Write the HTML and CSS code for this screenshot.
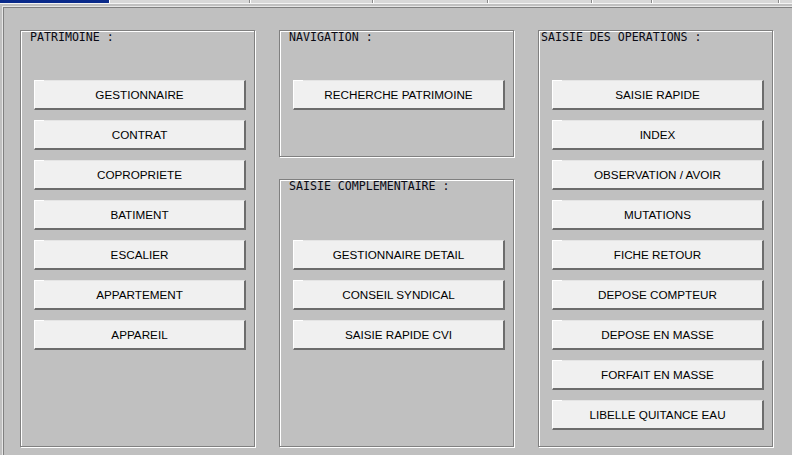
FILE: index.html
```html
<!DOCTYPE html>
<html>
<head>
<meta charset="utf-8">
<link rel="stylesheet" href="styles.css">
</head>
<body>
<div class="tabs">
  <div class="tab active" style="width:109px"></div>
  <div class="tab" style="width:141px"></div>
  <div class="tab" style="width:123px"></div>
  <div class="tab" style="width:115px"></div>
  <div class="tab" style="width:104px"></div>
  <div class="tab" style="width:60px"></div>
  <div class="tab" style="width:127px"></div>
  <div class="tab" style="width:40px"></div>
</div>
<div class="panel">
  <div class="columns">
    <div class="col">
      <div class="group group-full">
        <div class="legend">PATRIMOINE :</div>
        <div class="buttons first">
          <div class="btn">GESTIONNAIRE</div>
          <div class="btn">CONTRAT</div>
          <div class="btn">COPROPRIETE</div>
          <div class="btn">BATIMENT</div>
          <div class="btn">ESCALIER</div>
          <div class="btn">APPARTEMENT</div>
          <div class="btn">APPAREIL</div>
        </div>
      </div>
    </div>
    <div class="col col-split">
      <div class="group group-nav">
        <div class="legend">NAVIGATION :</div>
        <div class="buttons first">
          <div class="btn">RECHERCHE PATRIMOINE</div>
        </div>
      </div>
      <div class="group group-compl">
        <div class="legend">SAISIE COMPLEMENTAIRE :</div>
        <div class="buttons second">
          <div class="btn">GESTIONNAIRE DETAIL</div>
          <div class="btn">CONSEIL SYNDICAL</div>
          <div class="btn">SAISIE RAPIDE CVI</div>
        </div>
      </div>
    </div>
    <div class="col">
      <div class="group group-full">
        <div class="legend legend-tight">SAISIE DES OPERATIONS :</div>
        <div class="buttons first">
          <div class="btn">SAISIE RAPIDE</div>
          <div class="btn">INDEX</div>
          <div class="btn">OBSERVATION / AVOIR</div>
          <div class="btn">MUTATIONS</div>
          <div class="btn">FICHE RETOUR</div>
          <div class="btn">DEPOSE COMPTEUR</div>
          <div class="btn">DEPOSE EN MASSE</div>
          <div class="btn">FORFAIT EN MASSE</div>
          <div class="btn">LIBELLE QUITANCE EAU</div>
        </div>
      </div>
    </div>
  </div>
</div>
</body>
</html>
```
FILE: styles.css
```css
html, body {
  margin: 0;
  padding: 0;
  background: #c0c0c0;
  overflow: hidden;
  width: 792px;
  height: 455px;
}

.tabs {
  display: flex;
  height: 3px;
  border-bottom: 1px solid #f4f4f4;
  overflow: hidden;
}

.tab {
  flex: none;
  box-sizing: border-box;
  height: 3px;
  background: #d8d8d8;
  border-left: 1px solid #ffffff;
  border-right: 1px solid #8a8a8a;
}

.tab.active {
  background: #0a2a8a;
  border: none;
}

.panel {
  margin: 3px 0 0 3px;
  width: 820px;
  height: 470px;
  box-sizing: border-box;
  border-top: 1px solid #808080;
  border-left: 1px solid #808080;
  box-shadow: -1px -1px 0 #e6e6e6;
  padding: 22px 0 0 16px;
}

.columns {
  display: grid;
  grid-template-columns: 235px 235px 235px;
  column-gap: 24px;
}

.col-split {
  display: flex;
  flex-direction: column;
  gap: 22px;
}

.group {
  box-sizing: border-box;
  width: 235px;
  border: 1px solid #808080;
  box-shadow: 1px 1px 0 #ffffff, inset 1px 1px 0 #ffffff;
}

.group-full { height: 417px; }
.group-nav { height: 127px; }
.group-compl { height: 268px; }

.legend {
  font-family: "DejaVu Sans Mono", monospace;
  font-size: 11.6px;
  line-height: 12px;
  height: 14px;
  color: #0a0a14;
  padding-left: 9px;
  white-space: pre;
}

.legend-tight { padding-left: 2px; }

.buttons {
  display: flex;
  flex-direction: column;
  gap: 10px;
  padding-left: 13px;
}

.buttons.first { margin-top: 35px; }
.buttons.second { margin-top: 46px; }

.btn {
  position: relative;
  box-sizing: border-box;
  width: 212px;
  height: 30px;
  background: #f0f0f0;
  border-top: 1px solid #e4e4e4;
  border-left: 1px solid #ffffff;
  border-right: 2px solid #6c6c6c;
  border-bottom: 2px solid #6c6c6c;
  padding-top: 0;
  display: flex;
  align-items: center;
  justify-content: center;
  font-family: "Liberation Sans", Arial, sans-serif;
  font-size: 11.7px;
  color: #000000;
  white-space: nowrap;
}

.btn::before {
  content: "";
  position: absolute;
  top: -1px;
  left: -1px;
  width: 10px;
  height: 1px;
  background: #ffffff;
}
```
